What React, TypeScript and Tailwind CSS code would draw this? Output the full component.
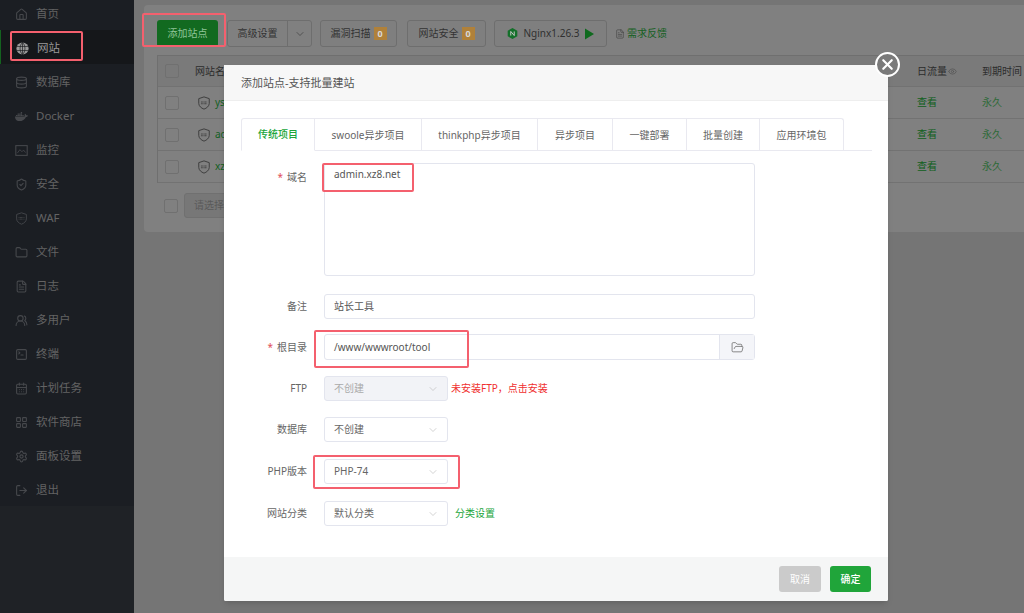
import type { ReactNode } from "react";
import {
  ChevronDown,
  Database,
  FileText,
  Folder,
  FolderOpen,
  Home,
  LayoutGrid,
  LogOut,
  Settings,
  ShieldCheck,
  SquareTerminal,
  CalendarDays,
  UsersRound,
  Eye,
  X,
} from "lucide-react";
import { FaDocker } from "react-icons/fa";

type IconProps = { className?: string };

const WafShield = ({ className }: IconProps) => (
  <svg viewBox="0 0 16 16" className={className} fill="none" stroke="currentColor" strokeWidth="1.1">
    <path d="M8 1 L14 3 V8.5 C14 11.5 11 14 8 15 C5 14 2 11.5 2 8.5 V3 Z" />
    <path d="M4.5 6.8 H11.5 M4.5 8.8 H11.5" strokeWidth="1.2" strokeDasharray="1 .6" />
  </svg>
);

const FilledGlobe = ({ className }: IconProps) => (
  <svg viewBox="0 0 16 16" className={className}>
    <circle cx="8" cy="8" r="7.5" fill="currentColor" />
    <path d="M.5 5.5 H15.5 M.5 10.5 H15.5 M8 .5 V15.5 M8 .5 C4 4 4 12 8 15.5 M8 .5 C12 4 12 12 8 15.5" stroke="#15171a" strokeWidth=".8" fill="none" />
  </svg>
);

const MonitorChart = ({ className }: IconProps) => (
  <svg viewBox="0 0 16 16" className={className} fill="none" stroke="currentColor" strokeWidth="1.3">
    <rect x="1" y="2" width="14" height="12" />
    <path d="M3 11 L6 7 L8.5 9.5 L10.5 7.5 L13 10.5" strokeWidth="1" />
  </svg>
);

const menu = [
  { label: "首页", icon: Home },
  { label: "网站", icon: FilledGlobe, active: true },
  { label: "数据库", icon: Database },
  { label: "Docker", icon: FaDocker },
  { label: "监控", icon: MonitorChart },
  { label: "安全", icon: ShieldCheck },
  { label: "WAF", icon: WafShield },
  { label: "文件", icon: Folder },
  { label: "日志", icon: FileText },
  { label: "多用户", icon: UsersRound },
  { label: "终端", icon: SquareTerminal },
  { label: "计划任务", icon: CalendarDays },
  { label: "软件商店", icon: LayoutGrid },
  { label: "面板设置", icon: Settings },
  { label: "退出", icon: LogOut },
];

const tabs = [
  { label: "传统项目", w: "w-[74px]" },
  { label: "swoole异步项目", w: "w-[107px]" },
  { label: "thinkphp异步项目", w: "w-[116px]" },
  { label: "异步项目", w: "w-[75px]" },
  { label: "一键部署", w: "w-[74px]" },
  { label: "批量创建", w: "w-[73px]" },
  { label: "应用环境包", w: "w-[84px]" },
];

const sites = ["ys", "ad", "xz"];

const Checkbox = () => <span className="block h-[14px] w-[14px] rounded-[2px] border border-[#707070]" />;

const ToolButton = ({ children, w }: { children: ReactNode; w: string }) => (
  <div className={`flex h-[27px] items-center justify-center gap-[3px] rounded-[3px] border border-[#6e6e6e] bg-[#7f7f7f] text-[#333] ${w}`}>
    {children}
  </div>
);

const Badge = () => (
  <span className="flex h-[13px] w-[13px] items-center justify-center rounded-none bg-[#b0813a] text-[9px] font-bold text-[#d8d8d8]">0</span>
);

const Row = ({
  label,
  required,
  mt,
  top,
  children,
}: {
  label: string;
  required?: boolean;
  mt: string;
  top?: boolean;
  children: ReactNode;
}) => (
  <div className={`flex ${top ? "items-start" : "items-center"} ${mt}`}>
    <div className={`w-[83px] shrink-0 text-right text-[#666] ${top ? "pt-[7px]" : ""}`}>
      {required && <span className="mr-[4px] text-[#e0505a]">*</span>}
      {label}
    </div>
    <div className="ml-[17px] flex items-center">{children}</div>
  </div>
);

const Select = ({ value, disabled, h = "h-[25px]" }: { value: string; disabled?: boolean; h?: string }) => (
  <div
    className={`flex w-[124px] items-center justify-between rounded-[3px] border border-[#e3e5ee] pl-[9px] pr-[8px] ${h} ${
      disabled ? "bg-[#f2f3f7] text-[#aaa]" : "bg-white text-[#666]"
    }`}
  >
    {value}
    <ChevronDown className="h-[12px] w-[12px] text-[#b5b5b5]" strokeWidth={1.2} />
  </div>
);

const Mark = ({ className }: { className: string }) => (
  <div className={`absolute rounded-[2px] border-2 border-[#f4606e] ${className}`} />
);

export default function App() {
  return (
    <div
      className="relative flex h-[613px] w-[1024px] overflow-hidden bg-[#757575] text-[10px]"
      style={{ fontFamily: '"Noto Sans", "Noto Sans CJK SC", sans-serif' }}
    >
      {/* sidebar */}
      <aside className="w-[134px] shrink-0 bg-[#1f2226]">
        <nav className="-mt-[4px] bg-[#1b1e23]">
          {menu.map((m) => (
            <div
              key={m.label}
              className={`flex h-[34px] items-center gap-[8px] pl-[15px] pt-[2px] text-[11.5px] ${
                m.active ? "border-l border-[#14621f] bg-[#15171a] pl-[14px] text-[#999]" : "text-[#636363]"
              }`}
            >
              <m.icon className={`h-[13px] w-[13px] ${m.active ? "text-[#999]" : "text-[#46484c]"}`} />
              {m.label}
            </div>
          ))}
        </nav>
      </aside>

      {/* page behind the dialog */}
      <main className="min-w-0 flex-1 pl-[10px] pt-[5px]">
        <div className="h-[227px] w-[900px] rounded-[4px] bg-[#808080] pl-[13px] pt-[15px]">
          <div className="flex items-center">
            <div className="flex h-[27px] w-[61px] items-center justify-center rounded-[3px] bg-[#126a20] text-[#8fc498]">添加站点</div>
            <div className="ml-[9px] flex h-[27px] w-[85px] rounded-[3px] border border-[#6e6e6e] text-[#333]">
              <span className="flex w-[60px] items-center justify-center border-r border-[#6e6e6e]">高级设置</span>
              <span className="flex flex-1 items-center justify-center">
                <ChevronDown className="h-[12px] w-[12px]" strokeWidth={1.2} />
              </span>
            </div>
            <div className="ml-[8px]">
              <ToolButton w="w-[77px]">
                漏洞扫描 <Badge />
              </ToolButton>
            </div>
            <div className="ml-[10px]">
              <ToolButton w="w-[79px]">
                网站安全 <Badge />
              </ToolButton>
            </div>
            <div className="ml-[8px]">
              <ToolButton w="w-[113px]">
                <svg viewBox="0 0 16 16" className="h-[11px] w-[11px]">
                  <path d="M8 0 L15 4 V12 L8 16 L1 12 V4 Z" fill="#14702a" />
                  <path d="M5.5 11 V5 L10.5 11 V5" stroke="#c8c8c8" strokeWidth="1.4" fill="none" />
                </svg>
                <span className="mx-[2px] text-[#303030]">Nginx1.26.3</span>
                <svg viewBox="0 0 10 12" className="h-[12px] w-[9px]">
                  <path d="M0 0 L10 6 L0 12 Z" fill="#0f6a1e" />
                </svg>
              </ToolButton>
            </div>
            <div className="ml-[8px] flex items-center gap-[2px] text-[#145f22]">
              <FileText className="h-[12px] w-[10px] text-[#333]" strokeWidth={1.2} />
              需求反馈
            </div>
          </div>

          <div className="mt-[8px] border-l border-t border-[#6f6f6f] text-[#2c2c2c]">
            <div className="grid h-[31px] grid-cols-[37px_722px_65px_auto] items-center border-b border-[#727272] bg-[#7a7a7a]">
              <div className="pl-[7px]">
                <Checkbox />
              </div>
              <div>网站名</div>
              <div className="flex items-center gap-[1px]">
                日流量
                <Eye className="h-[9px] w-[9px] text-[#555]" />
              </div>
              <div>到期时间</div>
            </div>
            {sites.map((s) => (
              <div key={s} className="grid h-[32px] grid-cols-[37px_722px_65px_auto] items-center border-b border-[#727272]">
                <div className="pl-[7px]">
                  <Checkbox />
                </div>
                <div className="flex items-center gap-[4px] pl-[2px] text-[#125f22]">
                  <WafShield className="h-[14px] w-[14px] text-[#3c3c3c]" />
                  {s}
                </div>
                <div className="text-[#0f5f1c]">查看</div>
                <div className="text-[#2e6a38]">永久</div>
              </div>
            ))}
          </div>

          <div className="mt-[10px] flex items-center pl-[7px]">
            <Checkbox />
            <div className="ml-[6px] flex h-[25px] w-[100px] items-center rounded-[3px] border border-[#707070] bg-[#777] pl-[9px] text-[#5a5a5a]">
              请选择
            </div>
          </div>
        </div>
      </main>

      {/* dialog */}
      <div className="absolute left-[224px] top-[65px] flex h-[536px] w-[664px] flex-col rounded-[2px] bg-white shadow-md">
        <div className="flex h-[36px] items-center border-b border-[#eeeeee] bg-[#f7f7f7] pl-[17px] pt-[2px] text-[11px] text-[#555]">
          添加站点-支持批量建站
        </div>

        <div className="ml-[17px] mr-[16px] mt-[17px] flex h-[33px] border-b border-[#e9e9f0] text-[#666]">
          {tabs.map((t, i) => (
            <div
              key={t.label}
              className={`-mb-px flex items-center justify-center border-r border-t border-[#e9e9f0] ${t.w} ${
                i === 0 ? "rounded-tl-[3px] border-b border-l border-b-white font-medium text-[#20a53a]" : ""
              } ${i === tabs.length - 1 ? "rounded-tr-[3px]" : ""}`}
            >
              {t.label}
            </div>
          ))}
        </div>

        <Row label="域名" required top mt="mt-[12px]">
          <div className="h-[113px] w-[431px] rounded-[3px] border border-[#e3e5ee] pl-[9px] pt-[3px] text-[#555]">admin.xz8.net</div>
        </Row>
        <Row label="备注" mt="mt-[18px]">
          <div className="flex h-[25px] w-[431px] items-center rounded-[3px] border border-[#e3e5ee] pl-[9px] text-[#555]">站长工具</div>
        </Row>
        <Row label="根目录" required mt="mt-[15px]">
          <div className="flex h-[26px] w-[431px] rounded-[3px] border border-[#e3e5ee] text-[#555]">
            <div className="flex flex-1 items-center pl-[9px]">/www/wwwroot/tool</div>
            <div className="flex w-[35px] items-center justify-center border-l border-[#e3e5ee] bg-[#f4f5f9]">
              <FolderOpen className="h-[13px] w-[13px] text-[#666]" strokeWidth={1.4} />
            </div>
          </div>
        </Row>
        <Row label="FTP" mt="mt-[16px]">
          <Select value="不创建" disabled />
          <span className="ml-[3px] text-[#f03030]">未安装FTP，点击安装</span>
        </Row>
        <Row label="数据库" mt="mt-[16px]">
          <Select value="不创建" />
        </Row>
        <Row label="PHP版本" mt="mt-[17px]">
          <Select value="PHP-74" />
        </Row>
        <Row label="网站分类" mt="mt-[17px]">
          <Select value="默认分类" />
          <span className="ml-[7px] text-[#20a53a]">分类设置</span>
        </Row>

        <div className="mt-auto flex h-[44px] items-center justify-end gap-[9px] rounded-b-[2px] bg-[#f5f6f6] pr-[17px] text-white">
          <div className="flex h-[26px] w-[42px] items-center justify-center rounded-[3px] bg-[#cbcbcb]">取消</div>
          <div className="flex h-[26px] w-[41px] items-center justify-center rounded-[3px] bg-[#20a53a] font-medium">确定</div>
        </div>

        <div className="absolute -right-[12px] -top-[13px] flex h-[25px] w-[25px] items-center justify-center rounded-full border-2 border-white bg-[#7a7a7a]">
          <X className="h-[17px] w-[17px] text-white" strokeWidth={3} />
        </div>
      </div>

      {/* red annotation boxes drawn on the screenshot */}
      <Mark className="left-[142px] top-[13px] h-[34px] w-[84px]" />
      <Mark className="left-[10px] top-[31px] h-[30px] w-[73px]" />
      <Mark className="left-[322px] top-[163px] h-[29px] w-[92px]" />
      <Mark className="left-[314px] top-[330px] h-[38px] w-[155px]" />
      <Mark className="left-[313px] top-[455px] h-[34px] w-[147px]" />
    </div>
  );
}
